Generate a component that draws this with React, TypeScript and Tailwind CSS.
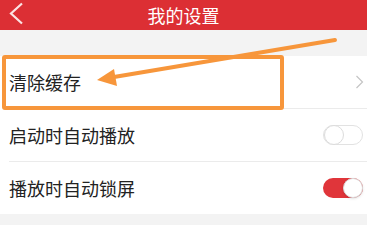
import { useState } from "react"

function Toggle({ on }: { on: boolean }) {
  return (
    <div
      className={
        on
          ? "relative w-[40px] h-[20px] rounded-full bg-[#e0353a]"
          : "relative w-[40px] h-[20px] rounded-full bg-white border border-[#e2e2e2]"
      }
    >
      <div
        className={
          on
            ? "absolute right-0 top-0 w-[20px] h-[20px] rounded-full bg-white border border-[#dcdcdc] shadow-sm"
            : "absolute left-0 top-[-1px] w-[20px] h-[20px] rounded-full bg-white border border-[#dcdcdc]"
        }
      />
    </div>
  )
}

export default function App() {
  const [autoPlay] = useState(false)
  const [autoLock] = useState(true)

  return (
    <div
      className="relative w-[367px] h-[225px] overflow-hidden bg-[#f3f3f3] text-[#222]"
      style={{ fontFamily: '"Noto Sans CJK SC", "Noto Sans", sans-serif' }}
    >
      <header className="relative h-[30px] bg-[#dc2f34] flex items-center justify-center">
        <svg className="absolute left-[8px] top-[2px]" width="16" height="23" viewBox="0 0 16 23">
          <path d="M14 1.5 L3 11.5 L14 21.5" fill="none" stroke="#fbe3e3" strokeWidth="2.2" />
        </svg>
        <h1 className="text-[18px] leading-none text-white">我的设置</h1>
      </header>

      <div className="h-[26px]" />

      <div className="bg-white">
        <div className="h-[52px] pl-[9px] pr-[3px] flex items-center justify-between">
          <span className="text-[18px]">清除缓存</span>
          <svg width="9" height="14" viewBox="0 0 9 14">
            <path d="M1.5 1 L7.5 7 L1.5 13" fill="none" stroke="#c4c4c4" strokeWidth="1.2" />
          </svg>
        </div>
        <div className="ml-[9px] border-t border-[#ebebeb]" />
        <div className="h-[52px] pl-[9px] pr-[4px] flex items-center justify-between">
          <span className="text-[18px]">启动时自动播放</span>
          <Toggle on={autoPlay} />
        </div>
        <div className="ml-[9px] border-t border-[#ebebeb]" />
        <div className="h-[52px] pl-[9px] pr-[4px] flex items-center justify-between">
          <span className="text-[18px]">播放时自动锁屏</span>
          <Toggle on={autoLock} />
        </div>
      </div>

      {/* annotation */}
      <div className="absolute left-[2px] top-[55px] w-[282px] h-[55px] border-[4px] border-[#f7963b] rounded-[3px]" />
      <svg className="absolute left-0 top-0" width="367" height="225" viewBox="0 0 367 225">
        <line x1="335" y1="40" x2="108" y2="78" stroke="#f7963b" strokeWidth="4" strokeLinecap="round" />
        <polygon points="97,80 114,69 117,86" fill="#f7963b" />
      </svg>
    </div>
  )
}
